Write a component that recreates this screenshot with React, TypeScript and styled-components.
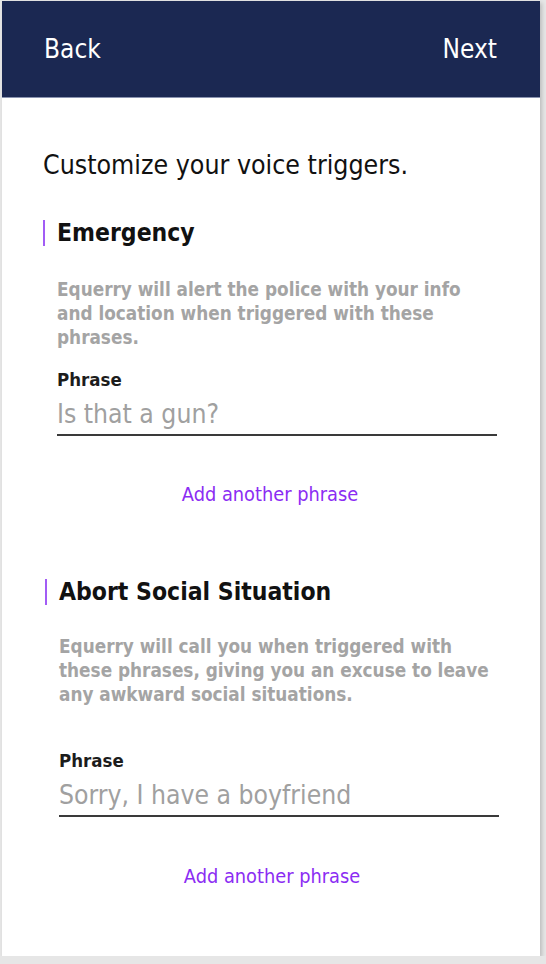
import React from "react";
import styled, { createGlobalStyle } from "styled-components";

const Global = createGlobalStyle`
  html, body { margin: 0; padding: 0; background: #e6e6e6; }
  body { font-family: "DejaVu Sans Condensed", "DejaVu Sans", sans-serif; font-stretch: condensed; }
  * { box-sizing: border-box; }
`;

const Screen = styled.div`
  margin: 1px 0 0 2px;
  width: 538px;
  height: 955px;
  background: #fff;
  box-shadow: 2px 2px 4px rgba(0,0,0,0.18);
  display: flex;
  flex-direction: column;
`;

const Header = styled.header`
  height: 97px;
  flex-shrink: 0;
  background: #1b2852;
  border-bottom: 1px solid #8a93b0;
  display: flex;
  align-items: center;
  justify-content: space-between;
  padding: 0 43px 0 42px;
`;

const NavButton = styled.button`
  background: none;
  border: none;
  padding: 0;
  color: #fff;
  font: inherit;
  font-size: 26px;
  cursor: pointer;
`;

const Body = styled.main`
  padding: 52px 0 0 41px;
  display: flex;
  flex-direction: column;
`;

const Intro = styled.h1`
  margin: 0 0 40px 0;
  font-size: 26.5px;
  font-weight: normal;
  color: #111;
  line-height: 30px;
`;

const Section = styled.section<{ $shift: number; $top: number }>`
  margin-left: ${(p) => p.$shift}px;
  margin-top: ${(p) => p.$top}px;
  width: 454px;
  display: flex;
  flex-direction: column;
`;

const Title = styled.h2`
  margin: 0;
  border-left: 2px solid #a25cf5;
  padding-left: 12px;
  font-size: 24.5px;
  font-weight: bold;
  color: #111;
  line-height: 26px;
`;

const Desc = styled.p<{ $top: number }>`
  margin: ${(p) => p.$top}px 0 0 0;
  padding-left: 14px;
  font-size: 18.8px;
  font-weight: bold;
  color: #a4a4a4;
  line-height: 24px;
`;

const Label = styled.label<{ $top: number }>`
  display: block;
  margin-top: ${(p) => p.$top}px;
  padding-left: 14px;
  font-size: 18.5px;
  font-weight: bold;
  color: #1c1c1c;
  line-height: 24px;
`;

const Field = styled.div`
  margin: 4px 0 0 14px;
  border-bottom: 2px solid #3a3a3a;
  font-size: 26.3px;
  color: #a0a0a0;
  line-height: 36px;
  padding-bottom: 2px;
`;

const AddLink = styled.a<{ $top: number }>`
  align-self: center;
  margin-top: ${(p) => p.$top}px;
  font-size: 19.8px;
  color: #8b2cf3;
  line-height: 24px;
  cursor: pointer;
`;

type Trig = {
  title: string;
  desc: string;
  placeholder: string;
  shift: number;
  top: number;
  descTop: number;
  labelTop: number;
  addTop: number;
};

const triggers: Trig[] = [
  {
    title: "Emergency",
    desc: "Equerry will alert the police with your info and location when triggered with these phrases.",
    placeholder: "Is that a gun?",
    shift: 0,
    top: 0,
    descTop: 32,
    labelTop: 18,
    addTop: 47,
  },
  {
    title: "Abort Social Situation",
    desc: "Equerry will call you when triggered with these phrases, giving you an excuse to leave any awkward social situations.",
    placeholder: "Sorry, I have a boyfriend",
    shift: 2,
    top: 72,
    descTop: 30,
    labelTop: 42,
    addTop: 48,
  },
];

export default function App() {
  return (
    <>
      <Global />
      <Screen>
        <Header>
          <NavButton>Back</NavButton>
          <NavButton>Next</NavButton>
        </Header>
        <Body>
          <Intro>Customize your voice triggers.</Intro>
          {triggers.map((t) => (
            <Section key={t.title} $shift={t.shift} $top={t.top}>
              <Title>{t.title}</Title>
              <Desc $top={t.descTop}>{t.desc}</Desc>
              <Label $top={t.labelTop}>Phrase</Label>
              <Field>{t.placeholder}</Field>
              <AddLink $top={t.addTop}>Add another phrase</AddLink>
            </Section>
          ))}
        </Body>
      </Screen>
    </>
  );
}
